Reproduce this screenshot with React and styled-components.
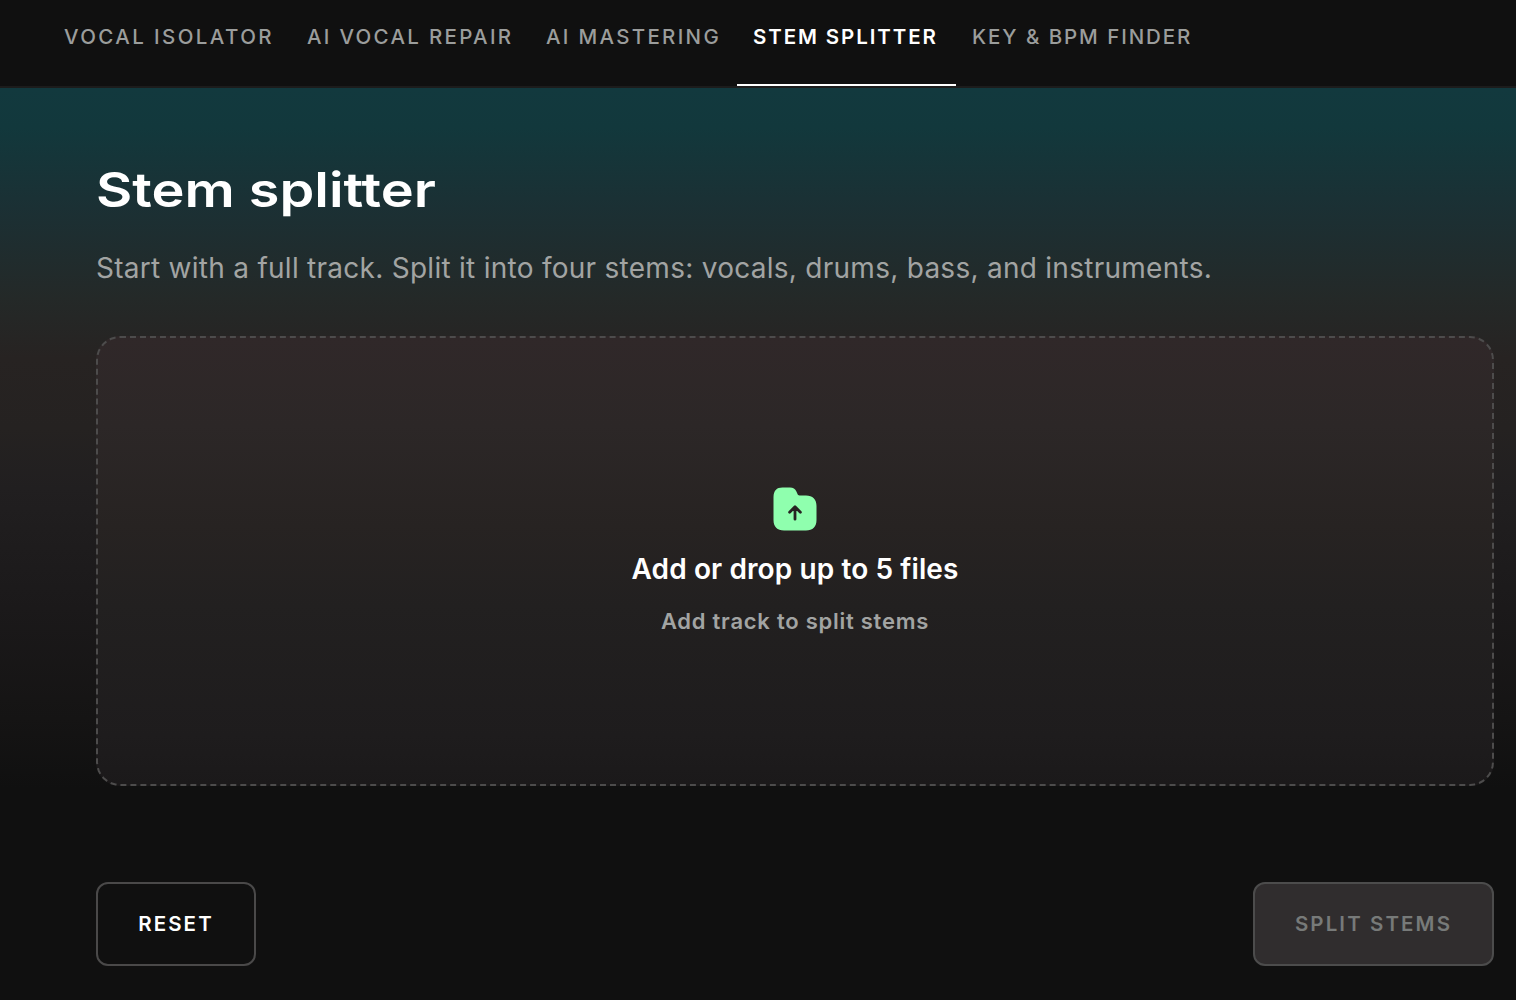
import React, { useState } from 'react'
import styled, { createGlobalStyle } from 'styled-components'

const tabs = [
  { label: 'Vocal isolator', spacing: 2.4, width: 243 },
  { label: 'AI vocal repair', spacing: 2.3, width: 239 },
  { label: 'AI mastering', spacing: 2.3, width: 207 },
  { label: 'Stem splitter', spacing: 1.9, width: 219 },
  { label: 'Key & BPM finder', spacing: 1.93, width: 253 },
]

const FolderIcon = () => (
  <svg width='44' height='44' viewBox='0 0 44 44' fill='none'>
    <path
      d='M9.5 0.5H17C20.2 0.5 22.2 1.8 23.4 4.5L24.4 6.8C24.8 7.9 25.4 8.4 26.6 8.4H33C39.6 8.4 43.5 12.2 43.5 19V33C43.5 39.8 39.8 43.5 33 43.5H11C4.2 43.5 0.5 39.8 0.5 33V10C0.5 3.8 3.5 0.5 9.5 0.5Z'
      fill='#8fffae'
    />
    <path
      d='M22 32.2V20M16.6 25.2L22 19.8L27.4 25.2'
      stroke='#272322'
      strokeWidth='2.8'
      strokeLinecap='round'
      strokeLinejoin='round'
    />
  </svg>
)

const App = () => {
  const [active, setActive] = useState('Stem splitter')

  return (
    <Page>
      <GlobalStyle />
      <Navbar>
        {tabs.map((tab) => (
          <Tab
            key={tab.label}
            $active={tab.label === active}
            $spacing={tab.spacing}
            $width={tab.width}
            onClick={() => setActive(tab.label)}
          >
            {tab.label}
          </Tab>
        ))}
      </Navbar>
      <Main>
        <Title>Stem splitter</Title>
        <Subtitle>
          Start with a full track. Split it into four stems: vocals, drums,
          bass, and instruments.
        </Subtitle>
        <DropZone>
          <FolderIcon />
          <DropTitle>Add or drop up to 5 files</DropTitle>
          <DropHint>Add track to split stems</DropHint>
        </DropZone>
        <Actions>
          <ResetButton>Reset</ResetButton>
          <SplitButton disabled>Split stems</SplitButton>
        </Actions>
      </Main>
    </Page>
  )
}

export default App

const GlobalStyle = createGlobalStyle`
  * {
    box-sizing: border-box;
  }
  body {
    margin: 0;
    background: #101010;
    font-family: Inter, 'Liberation Sans', sans-serif;
  }
  h1, p {
    margin: 0;
    white-space: nowrap;
  }
`

const Page = styled.div`
  display: flex;
  flex-direction: column;
  height: 1000px;
  overflow: hidden;
`

const Navbar = styled.nav`
  display: flex;
  flex: none;
  height: 88px;
  padding-left: 48px;
  background: #101010;
  border-bottom: 2px solid #1c1c1c;
`

const Tab = styled.button`
  flex: none;
  width: ${(props) => props.$width}px;
  height: 86px;
  padding: 0 0 11px 16px;
  background: none;
  border: none;
  border-bottom: 2px solid ${(props) => (props.$active ? '#fff' : 'transparent')};
  color: ${(props) => (props.$active ? '#fff' : '#9b9d9c')};
  font-family: Inter, sans-serif;
  font-size: 20.5px;
  font-weight: ${(props) => (props.$active ? 600 : 500)};
  line-height: 24px;
  letter-spacing: ${(props) => props.$spacing}px;
  text-align: left;
  text-transform: uppercase;
  white-space: nowrap;
`

const Main = styled.main`
  flex: 1;
  display: flex;
  flex-direction: column;
  padding: 72px 22px 0 96px;
  background: linear-gradient(
    180deg,
    #12393e 0px,
    #12383c 40px,
    #1b3034 120px,
    #242928 210px,
    #272322 270px,
    #252221 340px,
    #211f20 400px,
    #1b191a 520px,
    #151414 630px,
    #101010 700px
  );
`

const Title = styled.h1`
  align-self: flex-start;
  height: 60px;
  color: #fff;
  font-size: 48px;
  font-weight: 600;
  line-height: 59px;
  transform: scaleX(1.163);
  transform-origin: left;
`

const Subtitle = styled.p`
  margin-top: 28px;
  height: 40px;
  color: #a2a4a3;
  font-size: 28px;
  line-height: 40px;
  letter-spacing: 0.27px;
`

const DropZone = styled.section`
  display: flex;
  flex-direction: column;
  align-items: center;
  height: 450px;
  margin-top: 48px;
  padding-top: 149px;
  border: 2px dashed #4d4c4c;
  border-radius: 24px;
  background: linear-gradient(
      180deg,
      #302829 0px,
      #2c2727 90px,
      #272322 190px,
      #222020 270px,
      #1e1c1d 400px,
      #1b191a 450px
    )
    border-box;
`

const DropTitle = styled.p`
  margin-top: 20px;
  color: #fff;
  font-size: 28px;
  font-weight: 600;
  line-height: 36px;
  letter-spacing: 0.1px;
`

const DropHint = styled.p`
  margin-top: 18px;
  color: #a2a4a3;
  font-size: 22px;
  font-weight: 600;
  line-height: 32px;
  letter-spacing: 0.75px;
`

const Actions = styled.div`
  display: flex;
  justify-content: space-between;
  margin-top: 96px;
`

const Button = styled.button`
  height: 84px;
  padding: 0;
  border: 2px solid #4a4949;
  border-radius: 12px;
  font: 600 20.5px/24px Inter, sans-serif;
  letter-spacing: 2.1px;
  text-transform: uppercase;
  white-space: nowrap;
`

const ResetButton = styled(Button)`
  width: 160px;
  background: transparent;
  color: #fff;
`

const SplitButton = styled(Button)`
  width: 241px;
  background: #302d2e;
  border-color: #4c4c4c;
  color: #777a79;
`
